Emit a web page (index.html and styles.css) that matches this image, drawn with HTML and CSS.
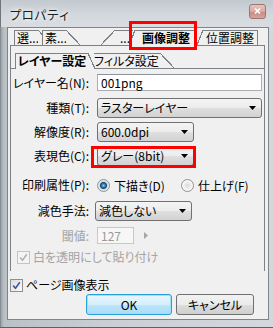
FILE: index.html
```html
<!DOCTYPE html>
<html lang="ja">
<head>
    <meta charset="UTF-8">
    <meta name="viewport" content="width=device-width, initial-scale=1.0">
    <title>プロパティ</title>
    <link rel="stylesheet" href="styles.css">
</head>
<body>
    <div class="window">
        <div class="titlebar">
            <span class="title">プロパティ</span>
            <span class="close-btn">
                <svg width="7" height="6" viewBox="0 0 7 6"><path d="M1 0.5 L6 5.5 M6 0.5 L1 5.5" stroke="#fff" stroke-width="1.6"/></svg>
            </span>
        </div>
        <div class="client">
            <div class="outer-tabs">
                <div class="tab-group">
                    <div class="tab tab-left tab-sel1"><span class="tab-label">選...</span></div>
                    <div class="tab tab-left tab-sel2"><span class="tab-label">素...</span></div>
                </div>
                <div class="tab-group">
                    <div class="tab tab-right tab-more"><span class="tab-label">...</span></div>
                    <div class="tab tab-right tab-steep tab-image active"><span class="tab-label">画像調整</span></div>
                    <div class="tab tab-right tab-steep tab-pos"><span class="tab-label">位置調整</span></div>
                </div>
            </div>
            <div class="outer-panel">
                <div class="inner-tabs">
                    <div class="tab tab-left tab-layer active"><span class="tab-label">レイヤー設定</span></div>
                    <div class="tab tab-left tab-filter"><span class="tab-label">フィルタ設定</span></div>
                </div>
                <div class="inner-body">
                    <div class="form">
                        <label class="form-label">レイヤー名(N):</label>
                        <div class="textbox">001png</div>

                        <label class="form-label row-kind">種類(T):</label>
                        <div class="combo row-kind">
                            <span>ラスターレイヤー</span>
                            <svg width="7" height="4" viewBox="0 0 7 4"><polygon points="0,0 7,0 3.5,4" fill="#000"/></svg>
                        </div>

                        <label class="form-label row-res">解像度(R):</label>
                        <div class="combo combo-short row-res">
                            <span>600.0dpi</span>
                            <svg width="7" height="4" viewBox="0 0 7 4"><polygon points="0,0 7,0 3.5,4" fill="#000"/></svg>
                        </div>

                        <label class="form-label row-color">表現色(C):</label>
                        <div class="combo combo-short row-color">
                            <span>グレー(8bit)</span>
                            <svg width="7" height="4" viewBox="0 0 7 4"><polygon points="0,0 7,0 3.5,4" fill="#000"/></svg>
                        </div>

                        <label class="form-label row-print">印刷属性(P):</label>
                        <div class="radios row-print">
                            <span class="radio checked"></span>
                            <span class="radio-text radio-text-first">下描き(D)</span>
                            <span class="radio"></span>
                            <span class="radio-text">仕上げ(F)</span>
                        </div>

                        <label class="form-label row-reduce shift">減色手法:</label>
                        <div class="combo combo-short row-reduce shift">
                            <span>減色しない</span>
                            <svg width="7" height="4" viewBox="0 0 7 4"><polygon points="0,0 7,0 3.5,4" fill="#000"/></svg>
                        </div>

                        <label class="form-label row-thresh disabled">閾値:</label>
                        <div class="thresh row-thresh">
                            <div class="textbox textbox-disabled">127</div>
                            <svg width="4" height="7" viewBox="0 0 4 7"><polygon points="0,0 4,3.5 0,7" fill="#a6a6a6"/></svg>
                        </div>
                    </div>
                    <div class="check-row check-white disabled">
                        <span class="checkbox checkbox-disabled">
                            <svg width="9" height="9" viewBox="0 0 9 9"><path d="M1.2 4.6 L3.5 7.2 L7.8 1.2" fill="none" stroke="#b0b0b0" stroke-width="1.5"/></svg>
                        </span>
                        <span>白を透明にして貼り付け</span>
                    </div>
                </div>
            </div>
            <div class="footer">
                <div class="check-row check-page">
                    <span class="checkbox">
                        <svg width="9" height="9" viewBox="0 0 9 9"><path d="M1.2 4.6 L3.5 7.2 L7.8 1.2" fill="none" stroke="#3b5a9a" stroke-width="1.6"/></svg>
                    </span>
                    <span>ページ画像表示</span>
                </div>
                <div class="buttons">
                    <button class="button button-default">OK</button>
                    <button class="button">キャンセル</button>
                </div>
            </div>
        </div>
        <div class="mark mark-tab"></div>
        <div class="mark mark-color"></div>
    </div>
</body>
</html>
```

FILE: styles.css
```css
body {
    margin: 0;
    font-family: "Noto Sans CJK JP", sans-serif;
    font-size: 12px;
    font-feature-settings: "palt";
    color: #000;
}

.window {
    position: relative;
    width: 273px;
    height: 328px;
    box-sizing: border-box;
    padding: 0 4px 7px 7px;
    display: flex;
    flex-direction: column;
    white-space: nowrap;
    background: linear-gradient(to right, #6f757b 0, #9ca3a9 1px, #b9c0c6 4px, #c9cfd4 40%, #d3d8dc 100%);
    border-bottom: 1px solid #5c6166;
}

.titlebar {
    height: 27px;
    display: flex;
    align-items: center;
    justify-content: space-between;
    margin-left: -7px;
    margin-right: -4px;
    padding: 0 5px 0 8px;
    background: linear-gradient(to bottom, #c2c9cf 0, #d4d9dd 60%, #d9dde1 100%);
    border-left: 1px solid #6f757b;
}

.title {
    font-size: 12.5px;
    font-feature-settings: normal;
    color: #1d1d1d;
    text-shadow: 0 0 4px #fff, 0 0 6px #fff;
    padding-top: 1px;
}

.close-btn {
    width: 17px;
    height: 15px;
    margin-top: -5px;
    margin-right: 2px;
    display: flex;
    align-items: center;
    justify-content: center;
    box-sizing: border-box;
    border: 1px solid #9a7772;
    border-radius: 3px;
    background: linear-gradient(to bottom, #e7c5bf 0, #d9a9a2 50%, #c68a81 51%, #d8a49c 100%);
}

.client {
    flex: 1;
    display: flex;
    flex-direction: column;
    background: #f0f0f0;
    border: 1px solid #7f858b;
}

/* tabs */

.outer-tabs {
    display: flex;
    justify-content: space-between;
    height: 15px;
    margin: 2px 10px 0 6px;
}

.tab-group {
    display: flex;
}

.tab {
    display: flex;
    height: 15px;
}

.tab-label {
    display: block;
    box-sizing: border-box;
    height: 100%;
    line-height: 14px;
    text-align: center;
    background: #f0f0f0;
    border-top: 1px solid #7d8186;
}

.tab-left .tab-label {
    border-left: 1px solid #7d8186;
}

.tab-left::after {
    content: "";
    width: 14px;
    background: linear-gradient(to top right, #f0f0f0 calc(50% - 0.6px), #7d8186 calc(50% - 0.6px), #7d8186 calc(50% + 0.6px), transparent calc(50% + 0.6px));
}

.tab-right::before {
    content: "";
    width: 14px;
    background: linear-gradient(to bottom right, transparent calc(50% - 0.6px), #7d8186 calc(50% - 0.6px), #7d8186 calc(50% + 0.6px), #f0f0f0 calc(50% + 0.6px));
}

.tab-steep::before {
    width: 6px;
}

.tab.active {
    position: relative;
    z-index: 1;
    height: 16px;
    margin-bottom: -1px;
    font-weight: bold;
}

.tab-sel1 .tab-label {
    width: 24px;
    text-align: left;
    padding-left: 2px;
}

.tab-sel2 {
    margin-left: -10px;
}

.tab-sel2 .tab-label {
    width: 24px;
    text-align: left;
    padding-left: 2px;
}

.tab-more .tab-label {
    width: 18px;
    padding-left: 5px;
    text-align: left;
}

.tab-image {
    margin-left: -4px;
}

.tab-image .tab-label {
    width: 62px;
}

.tab-pos .tab-label {
    width: 55px;
    border-right: 1px solid #7d8186;
}

.outer-panel {
    height: 225px;
    margin: 0 3px 0 2px;
    border: 1px solid #7d8186;
    border-bottom: none;
}

.inner-tabs {
    display: flex;
    margin: 7px 0 0 4px;
    height: 15px;
}

.tab-layer .tab-label {
    width: 73px;
}

.tab-layer::after {
    width: 7px;
}

.tab-filter {
    margin-left: -1px;
}

.tab-filter .tab-label {
    width: 66px;
    border-left: none;
    text-align: left;
}

.inner-body {
    border-top: 1px solid #7d8186;
    padding-top: 5px;
}

/* form */

.form {
    display: grid;
    grid-template-columns: 78px 1fr;
    column-gap: 8px;
    align-items: center;
    padding-right: 2px;
}

.form-label {
    text-align: right;
    line-height: 14px;
}

.row-kind {
    margin-top: 7px;
}

.row-res,
.row-color {
    margin-top: 4px;
}

.row-print {
    margin-top: 9px;
}

.row-reduce {
    margin-top: 6px;
}

.row-thresh {
    margin-top: 6px;
}

.shift {
    margin-left: -2px;
}

.disabled {
    color: #a3a3a3;
}

.textbox {
    height: 17px;
    box-sizing: border-box;
    padding-left: 3px;
    line-height: 15px;
    background: #fff;
    border: 1px solid #abadb3;
    border-top-color: #8e9299;
}

.textbox-disabled {
    width: 37px;
    color: #9a9a9a;
    background: #f7f7f7;
    border-color: #c8c8c8;
}

.combo {
    height: 20px;
    box-sizing: border-box;
    display: flex;
    align-items: center;
    justify-content: space-between;
    padding: 0 5px 0 3px;
    border: 1px solid #707070;
    border-radius: 3px;
    background: linear-gradient(to bottom, #f4f4f4 0, #ececec 50%, #dfdfdf 51%, #d2d2d2 100%);
    line-height: 14px;
}

.combo-short {
    width: 97px;
}

.radios {
    display: flex;
    align-items: center;
    height: 20px;
}

.radio {
    width: 13px;
    height: 13px;
    box-sizing: border-box;
    border-radius: 50%;
    border: 1px solid #8f9091;
    background: radial-gradient(circle, #d8d8d8 0, #eeeeee 3px, #fbfbfb 6px);
}

.radio.checked {
    background: radial-gradient(circle, #8ad0f2 0, #2a6fa6 2px, #16456e 3px, #c8dbe8 4px, #f6f6f6 6px);
}

.radio-text {
    margin-left: 4px;
}

.radio-text-first {
    width: 67px;
}

.thresh {
    display: flex;
    align-items: center;
    gap: 10px;
}

.check-row {
    display: flex;
    align-items: center;
    gap: 3px;
    line-height: 14px;
}

.check-white {
    margin: 6px 0 0 6px;
}

.checkbox {
    width: 13px;
    height: 13px;
    box-sizing: border-box;
    display: flex;
    align-items: center;
    justify-content: center;
    border: 1px solid #8f8f8f;
    background: linear-gradient(to bottom right, #dcdcdc, #fbfbfb);
}

.checkbox-disabled {
    border-color: #c4c4c4;
    background: #f4f4f4;
}

/* footer */

.footer {
    display: flex;
    flex-direction: column;
    margin-top: 7px;
}

.check-page {
    margin-left: 2px;
}

.buttons {
    display: flex;
    justify-content: flex-end;
    gap: 4px;
    margin: 2px 14px 0 0;
}

.button {
    height: 21px;
    padding: 0;
    font-family: "Noto Sans CJK JP", sans-serif;
    font-size: 12px;
    font-feature-settings: "palt";
    color: #000;
    border: 1px solid #707070;
    border-radius: 3px;
    background: linear-gradient(to bottom, #f2f2f2 0, #ebebeb 50%, #dddddd 51%, #cfcfcf 100%);
    width: 78px;
}

.button-default {
    width: 86px;
    border-color: #2b9fd8;
    box-shadow: inset 0 0 0 1px #9ee2fa;
    background: linear-gradient(to bottom, #e8f6fd 0, #d6effc 50%, #bde6fb 51%, #a9dcf6 100%);
}

/* annotation boxes */

.mark {
    position: absolute;
    box-sizing: border-box;
    border: 3px solid #f00;
    z-index: 5;
}

.mark-tab {
    left: 129px;
    top: 21px;
    width: 68px;
    height: 29px;
}

.mark-color {
    left: 91px;
    top: 146px;
    width: 105px;
    height: 22px;
}
```
